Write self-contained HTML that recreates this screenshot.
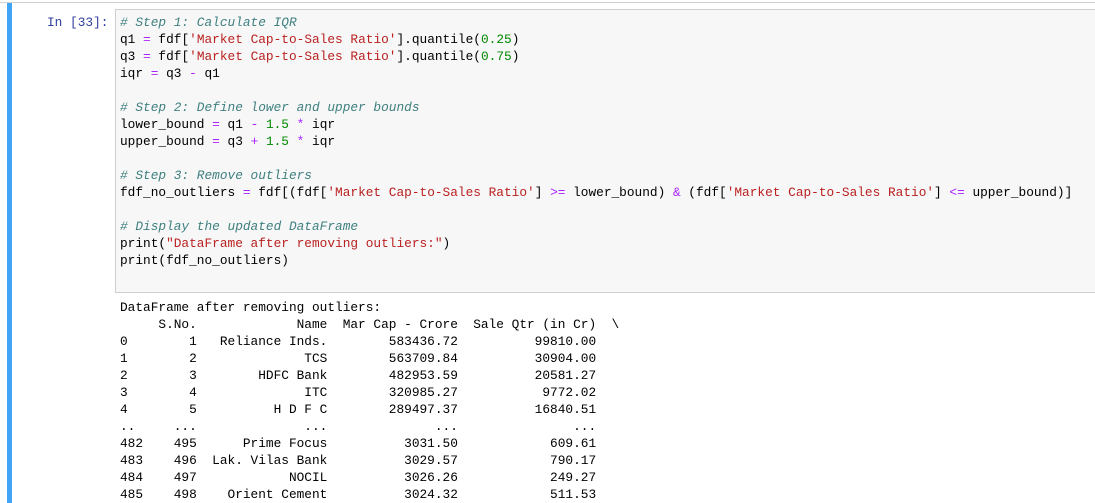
<!DOCTYPE html>
<html><head><style>
body{margin:0;background:#fff;width:1095px;height:500px;overflow:hidden;position:relative;font-family:"Liberation Mono",monospace;font-size:12.8px;}
.top{position:absolute;left:0;top:2px;width:1095px;height:1px;background:#d0d0d0;}
.bar{position:absolute;left:7px;top:3px;width:5px;height:500px;background:#42a5f5;}
.prompt{position:absolute;left:47px;top:14px;line-height:17px;color:#303f9f;}
.box{position:absolute;left:115px;top:9px;width:990px;height:282px;background:#f7f7f7;border:1px solid #cfcfcf;}
pre{margin:0;font-family:inherit;font-size:inherit;line-height:17px;white-space:pre;}
.code{position:absolute;left:120px;top:14px;color:#000;}
.out{position:absolute;left:120px;top:299px;color:#000;}
.c{color:#408080;font-style:italic}
.s{color:#ba2121}
.o{color:#aa22ff}
.n{color:#080}
</style></head><body>
<div class="top"></div>
<div class="bar"></div>
<div class="prompt">In [33]:</div>
<div class="box"></div>
<pre class="code"><span class="c"># Step 1: Calculate IQR</span>
q1 <span class="o">=</span> fdf[<span class="s">'Market Cap-to-Sales Ratio'</span>].quantile(<span class="n">0.25</span>)
q3 <span class="o">=</span> fdf[<span class="s">'Market Cap-to-Sales Ratio'</span>].quantile(<span class="n">0.75</span>)
iqr <span class="o">=</span> q3 <span class="o">-</span> q1

<span class="c"># Step 2: Define lower and upper bounds</span>
lower_bound <span class="o">=</span> q1 <span class="o">-</span> <span class="n">1.5</span> <span class="o">*</span> iqr
upper_bound <span class="o">=</span> q3 <span class="o">+</span> <span class="n">1.5</span> <span class="o">*</span> iqr

<span class="c"># Step 3: Remove outliers</span>
fdf_no_outliers <span class="o">=</span> fdf[(fdf[<span class="s">'Market Cap-to-Sales Ratio'</span>] <span class="o">&gt;=</span> lower_bound) <span class="o">&amp;</span> (fdf[<span class="s">'Market Cap-to-Sales Ratio'</span>] <span class="o">&lt;=</span> upper_bound)]

<span class="c"># Display the updated DataFrame</span>
print(<span class="s">"DataFrame after removing outliers:"</span>)
print(fdf_no_outliers)</pre>
<pre class="out">DataFrame after removing outliers:
     S.No.             Name  Mar Cap - Crore  Sale Qtr (in Cr)  \
0        1   Reliance Inds.        583436.72          99810.00   
1        2              TCS        563709.84          30904.00   
2        3        HDFC Bank        482953.59          20581.27   
3        4              ITC        320985.27           9772.02   
4        5          H D F C        289497.37          16840.51   
..     ...              ...              ...               ...   
482    495      Prime Focus          3031.50            609.61   
483    496  Lak. Vilas Bank          3029.57            790.17   
484    497            NOCIL          3026.26            249.27   
485    498    Orient Cement          3024.32            511.53   </pre>
</body></html>
